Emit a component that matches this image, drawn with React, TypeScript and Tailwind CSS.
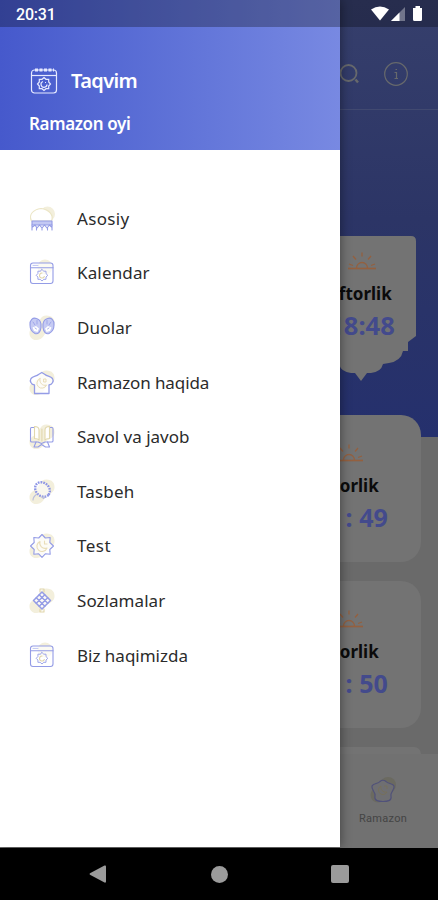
import type { ReactNode } from "react";

const BLUE = "#949ce6";
const SAND = "#f3efdc";

function Blob() {
  return (
    <path
      d="M18.500 1.500C24 1.500 27 5 26.500 10C26 14 22 16 19 17.500C16.500 19 15.500 25.500 9 26C4.500 26.500 1 23 1.500 18.500C2 14 6 13 8.500 11C11.500 8 12 1.500 18.500 1.500Z"
      fill={SAND}
      stroke="none"
    />
  );
}

function Icon({ children }: { children: ReactNode }) {
  return (
    <svg className="w-7 h-7 shrink-0" viewBox="0 0 28 28" fill="none" stroke={BLUE} strokeWidth="1.1" strokeLinejoin="round" strokeLinecap="round">
      {children}
    </svg>
  );
}

function HomeIcon() {
  return (
    <Icon>
      <circle cx="19.500" cy="9" r="7.500" fill={SAND} stroke="none" />
      <path d="M3.500 16C0 9 6 4.500 13 3.500C21 4.500 26 10 23.500 16Z" fill="#fff" stroke="#ebe5c5" />
      <path d="M4 16H24V20H4Z" fill="#c3c8f3" />
      <path d="M4 20V25M24 20V25M4.500 22L7 20L9 23L11.500 20L14 23L16.500 20L19 23L21.500 20L23.500 22M8.500 23V25M14 23V25M19.500 23V25" />
    </Icon>
  );
}

function CalendarIcon() {
  return (
    <Icon>
      <circle cx="17" cy="8" r="7.500" fill={SAND} stroke="none" />
      <rect x="2.500" y="4" width="22.500" height="20.500" rx="2.500" fill="#fff" fillOpacity=".65" />
      <path d="M2.500 8.700H25" />
      <path d="M5 6.400H10" strokeWidth=".6" />
      <path d="M14 10.500L15.800 12.200H18V14.600L19.800 16.300L18 18V20.300H15.800L14 22L12.200 20.300H9.900V18L8.200 16.300L9.900 14.600V12.200H12.200Z" strokeWidth=".9" />
      <path d="M14 14A2.500 2.500 0 1 0 16.300 17.500" stroke="#e0d5aa" />
    </Icon>
  );
}

function HandsIcon() {
  return (
    <Icon>
      <Blob />
      <g fill="#c6cbf3">
        <path d="M2 11C1.500 6 5 3 8.500 4.500C12 5.500 13.500 9 13 13.500C12.500 18 10 20.500 7 19.500C4 18 2 15 2 11Z" />
        <path d="M26 11C26.500 6 23 3 19.500 4.500C16 5.500 14.500 9 15 13.500C15.500 18 18 20.500 21 19.500C24 18 26 15 26 11Z" />
      </g>
      <path d="M4.500 13.500L8 12L11 14.500L9.500 18L6 17ZM23.500 13.500L20 12L17 14.500L18.500 18L22 17Z" fill="#fff" stroke="none" />
      <path d="M5 8L7 11M9 6.500V10M23 8L21 11M19 6.500V10M7 14L8.500 15M21 14L19.500 15" strokeWidth=".8" />
    </Icon>
  );
}

function BreadIcon() {
  return (
    <Icon>
      <Blob />
      <path d="M6.500 24.500V16C3 15.500 1.500 12 3 9.500C5 7 8.500 7.500 10.500 5.500L13.800 3.500L17 5.500C19 7.500 22.500 7 24.500 9.500C26 12 24.500 15.500 21 16V24.500Z" fill="#fff" fillOpacity=".8" strokeWidth="1.300" />
      <path d="M12 9.500A5 5 0 1 0 18.500 16C14.500 17.500 11 13.500 12 9.500M16 10H18V13H16Z" stroke="#e9ddb8" strokeWidth="1" />
    </Icon>
  );
}

function BookIcon() {
  return (
    <Icon>
      <Blob />
      <path d="M6.500 4.500H3.500Q2.500 4.500 2.500 6V18Q2.500 19 4 19H10L13.500 20.500L17 19H23.500Q25 19 25 18V6Q25 4.500 24 4.500H21.500" />
      <path d="M6.500 3.500Q11 3.500 11 7V17Q10 15.500 6.500 15.500ZM21.500 3.500Q17 3.500 17 7V17Q18 15.500 21.500 15.500ZM13.900 6V18" fill="#fff" stroke="#e2d8ae" />
      <path d="M8 19L6 24H10L13.500 21.500L17.500 24H21.500L19.500 19" />
    </Icon>
  );
}

function BeadsIcon() {
  return (
    <Icon>
      <Blob />
      <ellipse cx="14.500" cy="11.500" rx="8" ry="6.500" transform="rotate(42 14.500 11.500)" fill="#fff" fillOpacity=".5" stroke="#8d95e5" strokeWidth="2.400" strokeDasharray="1.700 1" strokeLinecap="butt" />
      <path d="M9 16C6 18 5 20 5 22M14 19L15.500 20.500L17 19" stroke="#b9bddd" />
    </Icon>
  );
}

function StarIcon() {
  return (
    <Icon>
      <Blob />
      <path d="M14 2.500L17.300 6L22.200 5.500L21.800 10.500L25.500 14L21.800 17.500L22.200 22.300L17.300 21.800L14 25.300L10.700 21.800L5.800 22.300L6.200 17.500L2.500 14L6.200 10.500L5.800 5.500L10.700 6Z" fill="#fff" fillOpacity=".75" />
      <path d="M12 9.500A5.200 5.200 0 1 0 19 16C14.500 17.500 10.800 13.500 12 9.500M16.500 9V12H19" stroke="#e9ddb8" />
    </Icon>
  );
}

function LatticeIcon() {
  return (
    <Icon>
      <Blob />
      <path d="M12 5V2H16V5M12 22V25H16V22" stroke="#e0d5aa" />
      <path d="M14 5L22.500 13.500L14 22L5.500 13.500Z" fill="#fff" fillOpacity=".7" strokeWidth="1.500" />
      <path d="M11.200 7.800L19.700 16.300M8.300 10.700L16.800 19.200M16.800 7.800L8.300 16.300M19.700 10.700L11.200 19.200" strokeWidth="1.400" />
    </Icon>
  );
}

const menu = [
  { label: "Asosiy", icon: <HomeIcon />, tracking: "tracking-[0.35px]" },
  { label: "Kalendar", icon: <CalendarIcon />, tracking: "tracking-[0.15px]" },
  { label: "Duolar", icon: <HandsIcon />, tracking: "tracking-[0.15px]" },
  { label: "Ramazon haqida", icon: <BreadIcon />, tracking: "tracking-[-0.1px]" },
  { label: "Savol va javob", icon: <BookIcon />, tracking: "tracking-[0px]" },
  { label: "Tasbeh", icon: <BeadsIcon />, tracking: "tracking-[0.2px]" },
  { label: "Test", icon: <StarIcon />, tracking: "tracking-[0.5px]" },
  { label: "Sozlamalar", icon: <LatticeIcon />, tracking: "tracking-[0.05px]" },
  { label: "Biz haqimizda", icon: <CalendarIcon />, tracking: "tracking-[0px]" },
];

function Sunset() {
  return (
    <svg className="w-7 h-5 shrink-0" viewBox="0 0 28 20" fill="none">
      <path d="M0 16.500H28" stroke="#94603f" strokeWidth="1.600" />
      <path d="M8.500 16A5.500 5.500 0 0 1 19.500 16M14 .5V4.500M5 4L8 7.500M23 4L20 7.500M1 12L5 13.500M27 12L23 13.500" stroke="#94603f" strokeWidth="1.300" />
    </svg>
  );
}

function TimeCard({ time }: { time: string }) {
  return (
    <div className="w-[144px] h-[147px] shrink-0 rounded-[20px] bg-[#737373] flex flex-col items-center pt-[29px]">
      <Sunset />
      <p className="mt-[9px] text-[17px] leading-[26px] font-bold text-[#0b0b0b]">Iftorlik</p>
      <p className="mt-px text-[25px] leading-[34px] font-bold text-[#434a8c] whitespace-nowrap tracking-[0.1px]">{time}</p>
    </div>
  );
}

function Screen() {
  return (
    <div className="h-[848px] bg-[#6a6a6a] flex flex-col overflow-hidden">
      <div className="h-[437px] shrink-0 bg-linear-to-b from-[#363f6c] via-[#2c3566] to-[#25306d] flex flex-col pt-[27px]">
        <div className="h-[83px] shrink-0 border-b border-[#414970] flex items-center justify-end gap-6 pt-[11px] pr-[30px] text-[#67696c]">
          <svg className="w-6 h-6" viewBox="0 0 24 24" fill="none" stroke="currentColor" strokeWidth="1.800">
            <circle cx="12.500" cy="11" r="8" />
            <path d="M19.500 17.500L22 20.500" strokeWidth="2.400" />
          </svg>
          <svg className="w-6 h-6" viewBox="0 0 24 24" fill="none" stroke="currentColor" strokeWidth="1.200">
            <circle cx="12" cy="12" r="11.300" />
            <path d="M10.500 10.500H12.500V16M10.500 16.500H14M11.500 7.500H13" />
          </svg>
        </div>
        <div className="relative mt-[126px] mr-[22px] w-[110px] h-[145px] self-end">
          <svg className="absolute inset-0 w-[110px] h-[145px]" viewBox="0 0 110 145" fill="#737373">
            <path d="M5 0H105Q110 0 110 5V100L102 106V115H97Q95 125 83 127L77 128Q75 136 65 137H61L55 145L49 137H45Q35 136 33 128L27 127Q15 125 13 115H8V106L0 100V5Q0 0 5 0Z" />
          </svg>
          <div className="relative flex flex-col items-center pt-[16px] pl-[2px]">
            <Sunset />
            <p className="mt-[9px] text-[17px] leading-[26px] font-bold text-[#0b0b0b]">Iftorlik</p>
            <p className="mt-px text-[25.5px] leading-[34px] font-bold text-[#434a8c]">18:48</p>
          </div>
        </div>
      </div>
      <div className="-mt-[22px] mr-[17px] h-[339px] shrink-0 flex flex-col items-end gap-[19px] overflow-hidden">
        <TimeCard time="18 : 49" />
        <TimeCard time="18 : 50" />
        <div className="w-[144px] h-[20px] rounded-t-[20px] bg-[#737373]" />
      </div>
      <div className="h-[94px] shrink-0 bg-[#717171] flex justify-end pr-[28px]">
        <div className="w-[54px] flex flex-col items-center pt-[22px]">
          <svg className="w-7 h-7" viewBox="0 0 28 28" fill="none">
            <circle cx="19" cy="9" r="8" fill="#6b6a60" />
            <circle cx="9" cy="19" r="7.500" fill="#6b6a60" />
            <path d="M6 20C7 16 2 14 3 10C4 7 9 8 11 5.500Q14 3 17 5.500C19 8 24 7 25 10C26 14 21 16 22 20C23 25 18 25.500 14 25.500C10 25.500 5 25 6 20Z" fill="#6f6f72" stroke="#50517a" strokeWidth="1.200" />
            <path d="M12 10A4.500 4.500 0 1 0 18 16C14 17 11 13 12 10M15 10H18V13" stroke="#77705a" />
          </svg>
          <p className="mt-[7px] text-[11px] leading-4 text-[#444] font-[Roboto,sans-serif] tracking-[0.3px]">Ramazon</p>
        </div>
      </div>
    </div>
  );
}

function Drawer() {
  return (
    <aside className="absolute left-0 top-0 w-[340px] h-[847px] bg-white shadow-[1px_0_10px_rgba(0,0,0,0.4)]">
      <header className="h-[150px] bg-linear-to-r from-[#4659cc] to-[#7889e2] text-white font-semibold pt-[66px] pl-[29px]">
        <div className="flex items-center h-[30px]">
          <svg className="w-[30px] h-[30px]" viewBox="0 0 30 30" fill="none" stroke="#e6e9ff" strokeWidth="1.200">
            <rect x="2.500" y="4" width="25" height="23" rx="3" />
            <path d="M2.500 9.500H27.500" />
            <path d="M6 4H25" strokeWidth="3" strokeDasharray="3 1.500" />
            <path d="M15 11.500L17 13.300H19.700V16L21.500 18L19.700 20V22.700H17L15 24.500L13 22.700H10.300V20L8.500 18L10.300 16V13.300H13Z" strokeWidth="1.200" />
            <path d="M14 15.500A3 3 0 1 0 18 18.500M16 16.500H17" />
          </svg>
          <h1 className="ml-[12px] text-[20px] leading-[30px] tracking-[-0.6px]">Taqvim</h1>
        </div>
        <h2 className="mt-[15px] text-[17px] leading-[26px] tracking-[-0.35px]">Ramazon oyi</h2>
      </header>
      <nav className="pt-[41.6px]">
        {menu.map((item) => (
          <div key={item.label} className="h-[54.6px] flex items-center pl-[28px] gap-[21px]">
            {item.icon}
            <span className={`text-[17px] leading-6 text-[#2b2b2b] whitespace-nowrap ${item.tracking}`}>{item.label}</span>
          </div>
        ))}
      </nav>
    </aside>
  );
}

function StatusBar() {
  return (
    <div className="absolute left-0 top-0 w-full h-[27px] bg-black/28 flex items-center justify-between pl-4 pr-[15px] text-white">
      <span className="text-[16px] leading-5 font-medium font-[Roboto,sans-serif] pt-[2px] tracking-[-0.2px]">20:31</span>
      <svg className="w-[52px] h-4 mt-px" viewBox="0 0 52 16" fill="#fff">
        <path d="M0 3.500Q9 -2.500 18 3.500L9 14.500Z" />
        <path d="M34 1V15H20Z" fillOpacity=".35" />
        <path d="M28.500 6.500V15H20Z" />
        <path d="M44.500 0H49V2H51V13.500Q51 15 49.500 15H43.500Q42 15 42 13.500V2H44.500Z" />
      </svg>
    </div>
  );
}

function App() {
  return (
    <div className="relative w-[438px] h-[900px] overflow-hidden bg-black font-['Noto_Sans',sans-serif]">
      <Screen />
      <Drawer />
      <StatusBar />
      <div className="h-[52px] flex items-center justify-between px-[89px]">
        <svg className="w-[17px] h-[18px]" viewBox="0 0 17 18" fill="#9b9b9b">
          <path d="M15.500 .5Q17 0 17 1.500V16.500Q17 18 15.500 17.500L1 9.800Q0 9 1 8.200Z" />
        </svg>
        <div className="ml-[2px] w-[17px] h-[17px] rounded-full bg-[#9b9b9b]" />
        <div className="w-[18px] h-[18px] rounded-[2px] bg-[#9b9b9b]" />
      </div>
    </div>
  );
}

export default App;
